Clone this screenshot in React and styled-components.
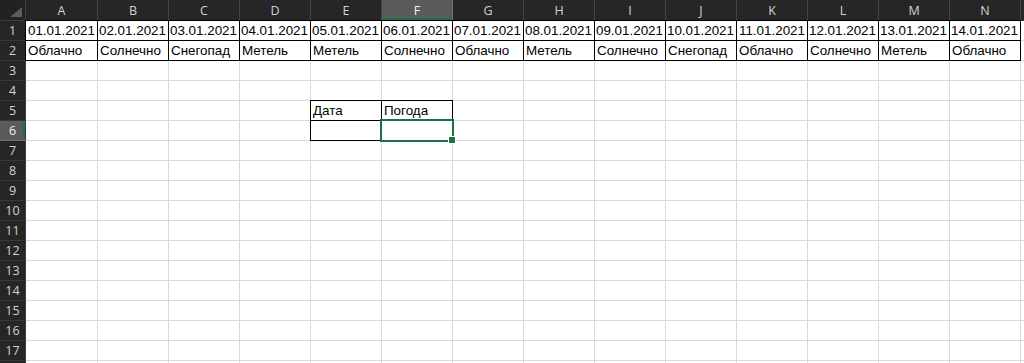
import React from 'react';
import styled, { createGlobalStyle, css } from 'styled-components';

const GlobalStyle = createGlobalStyle`
  html, body {
    margin: 0;
    padding: 0;
    background: #ffffff;
    overflow: hidden;
  }
`;

const COLS = ['A', 'B', 'C', 'D', 'E', 'F', 'G', 'H', 'I', 'J', 'K', 'L', 'M', 'N', 'O'];
const ROW_COUNT = 18;

const weather = [
  'Облачно', 'Солнечно', 'Снегопад', 'Метель', 'Метель', 'Солнечно', 'Облачно',
  'Метель', 'Солнечно', 'Снегопад', 'Облачно', 'Солнечно', 'Метель', 'Облачно',
];

const dates = weather.map((_, i) => `${String(i + 1).padStart(2, '0')}.01.2021`);

const Sheet = styled.div`
  display: grid;
  grid-template-columns: 26px 72px repeat(13, 71px) 1fr;
  grid-template-rows: 21px repeat(${ROW_COUNT}, 20px);
  width: 1024px;
  height: 363px;
  overflow: hidden;
  background: #ffffff;
`;

const Corner = styled.div`
  background: #222222;
  border-right: 1px solid #3c3c3c;
  border-bottom: 1px solid #3c3c3c;
  display: flex;
  align-items: flex-end;
  justify-content: flex-end;
  padding: 0 3px 3px 0;
`;

const ColHeader = styled.div`
  background: ${(p) => (p.$active ? '#5b5b5b' : '#262626')};
  color: ${(p) => (p.$active ? '#eef3ef' : '#d2d2d2')};
  border-right: 1px solid ${(p) => (p.$active ? '#707070' : '#454545')};
  border-bottom: 1px solid #3c3c3c;
  font-family: "Open Sans", "Liberation Sans", sans-serif;
  font-size: 12.5px;
  display: flex;
  align-items: center;
  justify-content: center;
  padding-top: 1px;
  overflow: hidden;
  ${(p) =>
    p.$active &&
    css`
      box-shadow: inset 0 -2px 0 #1e7145;
    `}
`;

const RowHeader = styled.div`
  background: ${(p) => (p.$active ? '#5b5b5b' : '#262626')};
  color: ${(p) => (p.$active ? '#eef3ef' : '#d2d2d2')};
  border-right: 1px solid #3c3c3c;
  border-bottom: 1px solid ${(p) => (p.$active ? '#707070' : '#383838')};
  font-family: "Open Sans", "Liberation Sans", sans-serif;
  font-size: 12.5px;
  display: flex;
  align-items: center;
  justify-content: center;
  ${(p) =>
    p.$active &&
    css`
      box-shadow: inset -2px 0 0 #1e7145;
    `}
`;

const Cell = styled.div`
  position: relative;
  border-right: 1px solid #d9d9d9;
  border-bottom: 1px solid #d9d9d9;
  font-family: "Liberation Sans", Arial, sans-serif;
  font-size: 13.4px;
  line-height: 15px;
  color: #000000;
  white-space: nowrap;
  display: flex;
  align-items: flex-end;
  justify-content: ${(p) => (p.$align === 'right' ? 'flex-end' : 'flex-start')};
  padding: 0 2px 2px 2px;
  ${(p) =>
    p.$boxed &&
    css`
      &::before {
        content: '';
        position: absolute;
        inset: -1px;
        border: 1px solid #000000;
        pointer-events: none;
      }
    `}
  ${(p) =>
    p.$selected &&
    css`
      &::after {
        content: '';
        position: absolute;
        top: -2px;
        left: -2px;
        right: -2px;
        bottom: -2px;
        border: 2px solid #1e7145;
        z-index: 2;
      }
    `}
`;

const FillHandle = styled.span`
  position: absolute;
  right: -3px;
  bottom: -3px;
  width: 6px;
  height: 6px;
  background: #1e7145;
  box-shadow: 0 0 0 1px #ffffff;
  z-index: 3;
`;

const CornerMark = () => (
  <svg width="12" height="10" viewBox="0 0 12 10">
    <polygon points="12,0 12,10 0,10" fill="#5c5c5c" />
  </svg>
);

const cellContent = (row, col) => {
  if (row === 1 && col < 14) return { text: dates[col], align: 'right', boxed: true };
  if (row === 2 && col < 14) return { text: weather[col], boxed: true };
  if (row === 5 && col === 4) return { text: 'Дата', boxed: true };
  if (row === 5 && col === 5) return { text: 'Погода', boxed: true };
  if (row === 6 && (col === 4 || col === 5)) return { text: '', boxed: true };
  return { text: '' };
};

export default function App() {
  const rows = Array.from({ length: ROW_COUNT }, (_, i) => i + 1);

  return (
    <>
      <GlobalStyle />
      <Sheet>
        <Corner>
          <CornerMark />
        </Corner>
        {COLS.map((c, ci) => (
          <ColHeader key={c} $active={c === 'F'}>
            {ci < 14 ? c : ''}
          </ColHeader>
        ))}
        {rows.map((r) => (
          <React.Fragment key={r}>
            <RowHeader $active={r === 6}>{r < ROW_COUNT ? r : ''}</RowHeader>
            {COLS.map((c, ci) => {
              const { text, align, boxed } = cellContent(r, ci);
              const selected = r === 6 && c === 'F';
              return (
                <Cell key={c} $align={align} $boxed={boxed} $selected={selected}>
                  {text}
                  {selected && <FillHandle />}
                </Cell>
              );
            })}
          </React.Fragment>
        ))}
      </Sheet>
    </>
  );
}
